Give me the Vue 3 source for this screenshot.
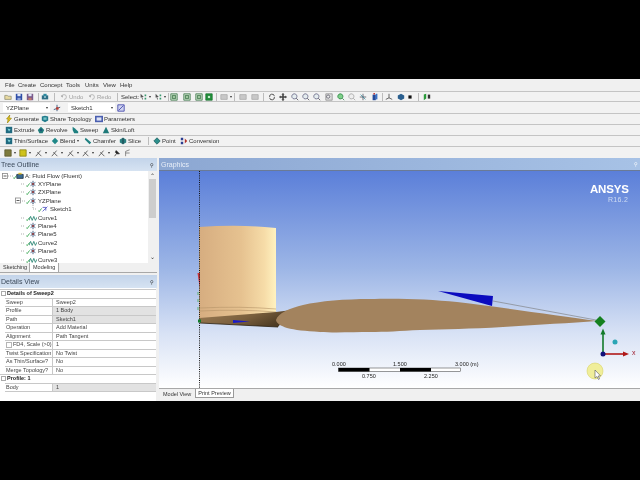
<script setup>
const shapes = {
  open: [['M1 8V3h3l1 1h4v4z', '#e8d9a0', '#8a8a70']],
  save: [['M1 1h8v8H1z', '#2f4fa8'], ['M3 1h4v3H3z', '#dfe6f5'], ['M3 6h4v3H3z', '#8fa3d8']],
  saveall: [['M1 1h8v8H1z', '#7a5b8c'], ['M3 1h4v3H3z', '#dfe6f5'], ['M3 6h4v3H3z', '#c27a6a']],
  shot: [['M1 3h8v5H1z', '#2e6f86'], ['M3 1h4v3H3z', '#2e8aa0'], ['M4 4h2v2H4z', '#bfe4ee']],
  undo: [['M2 5a3 3 0 1 1 3 3', 'none', '#a8a8a8'], ['M1 3l2 3 1-3z', '#a8a8a8']],
  sel: [['M2 1l4 4-2 0 1 3-1 0-1-3-1 1z', '#555'], ['M7 2h2v2H7zM7 6h2v2H7z', '#3a9a70']],
  box: [['M1 1h8v8H1z', '#cfe3cf', '#2d6b3a'], ['M3 3h4v4H3z', '#9fc49f', '#2d6b3a']],
  gbox: [['M1 1h8v8H1z', '#1fa03a', '#14662a'], ['M3 3h4v4H3z', '#bff0c8', '#14662a']],
  grey: [['M1 2h8v6H1z', '#c8c8c8', '#a8a8a8']],
  rot: [['M2 5a3 3 0 0 1 6-1', 'none', '#222'], ['M8 5a3 3 0 0 1-6 1', 'none', '#222']],
  pan: [['M5 0l2 2H6v2h2V3l2 2-2 2V6H6v2h1l-2 2-2-2h1V6H2v1L0 5l2-2v1h2V2H3z', '#444']],
  zoom: [['M4.2 1a3.2 3.2 0 1 1-.01 0z', '#e4ecef', '#557'], ['M6.5 6.5L9 9', 'none', '#334']],
  gzoom: [['M4.2 1a3.2 3.2 0 1 1-.01 0z', '#7ed08a', '#1d7a35'], ['M6.5 6.5L9 9', 'none', '#1d7a35']],
  lzoom: [['M4.2 1a3.2 3.2 0 1 1-.01 0z', '#eee', '#999'], ['M6.5 6.5L9 9', 'none', '#999']],
  fit: [['M1 1h8v8H1z', '#ddd', '#888'], ['M4 2.5a2 2 0 1 1-.01 0z', '#eee', '#445']],
  axes: [['M5 1v8M1 5h8', 'none', '#445'], ['M2 2l6 6', 'none', '#2a8a9a']],
  cube: [['M2 2h4v7H2z', '#244a9a'], ['M6 1h2v7H6z', '#3a72c8'], ['M3 0h2v2H3z', '#c23a3a']],
  tri: [['M5 1v5L1 8M5 6l4 2', 'none', '#333']],
  dcube: [['M1 3l4-2 4 2v4l-4 2-4-2z', '#2a5f8f']],
  dot: [['M3 3h4v4H3z', '#111']],
  pair: [['M1 2l3-1v6L1 9z', '#2a9a3a'], ['M6 2h3v5H6z', '#333']],
  bolt: [['M6 0L2 5h2L3 10l5-6H5z', '#e6c81e', '#a08a10']],
  share: [['M1 2l4-1 4 1v5l-4 2-4-2z', '#217c8c'], ['M3 3h4v3H3z', '#7ac4c8']],
  param: [['M0 1h10v8H0z', '#4a5fb0'], ['M2 3h6v4H2z', '#dde3f5']],
  ext: [['M1 1h8v8H1z', '#1f6a80'], ['M3 3l4 1-2 3z', '#7fd0d6']],
  rev: [['M5 1l4 4-2 4H3L1 5z', '#1f7a7a'], ['M4 4h2v2H4z', '#1a3f78']],
  swp: [['M2 1l3 2 4 4v2H4L2 5z', '#1f8080']],
  skin: [['M5 1l2 4 2 4H1l2-4z', '#1f7a7a']],
  blend: [['M1 5l4-4 4 4-4 4z', '#1f8888']],
  chamf: [['M2 1l7 6-2 2-6-6z', '#1f8080']],
  slice: [['M1 3l4-2 4 2v4l-4 2-4-2z', '#2a7f80'], ['M5 1v8', 'none', '#123']],
  point: [['M5 1l4 4-4 4-4-4z', '#2d8f8c', '#175a5a']],
  conv: [['M1 1h3v3H1zM1 6h3v3H1z', '#2b3d90'], ['M6 2l3 3-3 3z', '#b0302a']],
  olive: [['M1 1h8v8H1z', '#7d7a3c', '#55532a']],
  yel: [['M1 1h8v8H1z', '#cfc21c', '#807a10']],
  pen: [['M1 9l6-7M3 4l5 5', 'none', '#333']],
  pin: [['M2 9l3-4M4 2l4 4-3 0-2-2z', '#222', '#222']],
  flag: [['M2 9V3l5-2M2 5h5', 'none', '#666']],
  plane: [['M5 1v8M2 3l6 4M2 7l6-4', 'none', '#1d3f6b'], ['M4 4h2v2H4z', '#c0392b']],
  curve: [['M0 8l2-5 2 5 2-5 2 5 2-4', 'none', '#1b7d6a']],
  sketch: [['M2 8l6-6M2 3h4v4', 'none', '#4a4ec0']],
  body: [['M1 3h8v5H1z', '#3a6a90', '#234'], ['M3 1h4v2H3z', '#e0c030']]
}

const place = (list, end) => list.map((it, i) => ({ ...it, w: (i + 1 < list.length ? list[i + 1].x : end) - it.x }))

const menu = [['File', 5], ['Create', 18], ['Concept', 40], ['Tools', 66], ['Units', 85], ['View', 103], ['Help', 120]]
const menuItems = place(menu.map(([t, x]) => ({ t, x })), 140)

const toolRows = [
  place([
    { x: 4, i: 'open' }, { x: 15, i: 'save' }, { x: 26, i: 'saveall' }, { x: 38, sep: 1 }, { x: 41, i: 'shot' }, { x: 54, sep: 1 },
    { x: 60, i: 'undo', t: 'Undo', dim: 1 }, { x: 88, i: 'undo', t: 'Redo', dim: 1 }, { x: 117, sep: 1 }, { x: 121, t: 'Select:' },
    { x: 139, i: 'sel', tail: 1 }, { x: 154, i: 'sel', tail: 1 }, { x: 168, sep: 1 }, { x: 170, i: 'box' }, { x: 183, i: 'box' }, { x: 195, i: 'box' }, { x: 205, i: 'gbox' },
    { x: 216, sep: 1 }, { x: 220, i: 'grey', tail: 1 }, { x: 234, sep: 1 }, { x: 239, i: 'grey' }, { x: 251, i: 'grey' }, { x: 263, sep: 1 },
    { x: 268, i: 'rot' }, { x: 279, i: 'pan' }, { x: 291, i: 'zoom' }, { x: 302, i: 'zoom' }, { x: 313, i: 'zoom' }, { x: 325, i: 'fit' },
    { x: 337, i: 'gzoom' }, { x: 348, i: 'lzoom' }, { x: 359, i: 'axes' }, { x: 371, i: 'cube' }, { x: 382, sep: 1 }, { x: 385, i: 'tri' },
    { x: 397, i: 'dcube' }, { x: 406, i: 'dot' }, { x: 418, sep: 1 }, { x: 423, i: 'pair' }
  ], 440)
]
const lowerRows = [
  place([{ x: 5, i: 'bolt', t: 'Generate' }, { x: 41, i: 'share', t: 'Share Topology' }, { x: 95, i: 'param', t: 'Parameters' }], 140),
  place([{ x: 5, i: 'ext', t: 'Extrude' }, { x: 37, i: 'rev', t: 'Revolve' }, { x: 71, i: 'swp', t: 'Sweep' }, { x: 102, i: 'skin', t: 'Skin/Loft' }], 140),
  place([
    { x: 5, i: 'ext', t: 'Thin/Surface' }, { x: 51, i: 'blend', t: 'Blend', tail: 1 }, { x: 84, i: 'chamf', t: 'Chamfer' }, { x: 119, i: 'slice', t: 'Slice' },
    { x: 148, sep: 1 }, { x: 153, i: 'point', t: 'Point' }, { x: 180, i: 'conv', t: 'Conversion' }
  ], 225),
  place([
    { x: 4, i: 'olive', tail: 1 }, { x: 19, i: 'yel', tail: 1 }, { x: 35, i: 'pen', tail: 1 }, { x: 51, i: 'pen', tail: 1 }, { x: 67, i: 'pen', tail: 1 },
    { x: 82, i: 'pen', tail: 1 }, { x: 98, i: 'pen', tail: 1 }, { x: 113, i: 'pin' }, { x: 124, i: 'flag' }
  ], 136)
]

const tree = [
  { t: 'A: Fluid Flow (Fluent)', i: 'body', p: 13 },
  { t: 'XYPlane', i: 'plane', p: 26 },
  { t: 'ZXPlane', i: 'plane', p: 26 },
  { t: 'YZPlane', i: 'plane', p: 26 },
  { t: 'Sketch1', i: 'sketch', p: 38 },
  { t: 'Curve1', i: 'curve', p: 26 },
  { t: 'Plane4', i: 'plane', p: 26 },
  { t: 'Plane5', i: 'plane', p: 26 },
  { t: 'Curve2', i: 'curve', p: 26 },
  { t: 'Plane6', i: 'plane', p: 26 },
  { t: 'Curve3', i: 'curve', p: 26 }
]

const details = [
  { h: 'Details of Sweep2' },
  { k: 'Sweep', v: 'Sweep2' },
  { k: 'Profile', v: '1 Body', g: 1 },
  { k: 'Path', v: 'Sketch1', g: 1 },
  { k: 'Operation', v: 'Add Material' },
  { k: 'Alignment', v: 'Path Tangent' },
  { k: 'FD4, Scale (>0)', v: '1', c: 1 },
  { k: 'Twist Specification', v: 'No Twist' },
  { k: 'As Thin/Surface?', v: 'No' },
  { k: 'Merge Topology?', v: 'No' },
  { h: 'Profile: 1' },
  { k: 'Body', v: '1', g: 1 }
]
</script>

<template>
  <div class="screen">
    <div class="bar"></div>
    <div class="app">
      <nav class="menu">
        <span v-for="m in menuItems" :key="m.t" class="cell" :style="{ width: m.w + 'px' }">{{ m.t }}</span>
      </nav>

      <div class="tools">
        <div class="row r1">
          <span :style="{ width: toolRows[0][0].x + 'px' }"></span>
          <span v-for="(it, n) in toolRows[0]" :key="n" class="cell" :style="{ width: it.w + 'px' }">
            <span v-if="it.sep" class="sep"></span>
            <svg v-if="it.i" class="ico" viewBox="0 0 10 10">
              <path v-for="(s, j) in shapes[it.i]" :key="j" :d="s[0]" :fill="s[1]" :stroke="s[2] || 'none'" stroke-width="0.9" />
            </svg>
            <span v-if="it.t" :class="{ dim: it.dim }">{{ it.t }}</span>
            <span v-if="it.tail" class="caret"></span>
          </span>
        </div>

        <div class="row r2">
          <div class="combo first"><span>YZPlane</span><span class="caret"></span></div>
          <svg class="ico gapped" viewBox="0 0 10 10"><path d="M5 1v8M1 7l8-3" fill="none" stroke="#1d3f6b" /><path d="M4 4h3v3H4z" fill="#c0392b" /></svg>
          <div class="combo"><span>Sketch1</span><span class="caret"></span></div>
          <svg class="ico after" viewBox="0 0 10 10"><path d="M1 1h8v8H1z" fill="#cfd3f0" stroke="#3a3fa8" /><path d="M2 8l6-6" stroke="#3a3fa8" /></svg>
        </div>

        <div v-for="(r, k) in lowerRows" :key="k" class="row" :class="{ last: k === 3 }">
          <span :style="{ width: r[0].x + 'px' }"></span>
          <span v-for="(it, n) in r" :key="n" class="cell" :style="{ width: it.w + 'px' }">
            <span v-if="it.sep" class="sep"></span>
            <svg v-if="it.i" class="ico" viewBox="0 0 10 10">
              <path v-for="(s, j) in shapes[it.i]" :key="j" :d="s[0]" :fill="s[1]" :stroke="s[2] || 'none'" stroke-width="0.9" />
            </svg>
            <span v-if="it.t">{{ it.t }}</span>
            <span v-if="it.tail" class="caret"></span>
          </span>
        </div>
      </div>

      <div class="work">
        <aside class="side">
          <header class="phead">Tree Outline<span class="pin">⚲</span></header>
          <div class="tree">
            <svg class="lines" width="50" height="92" viewBox="0 0 50 92">
              <g stroke="#999" stroke-width="0.8" fill="none" stroke-dasharray="1 1">
                <path d="M8 5h5M21 13h4M21 21h4M22 30h3M33 32v6h4M21 47h4M21 55h4M21 63h4M21 72h4M21 80h4M21 89h4" />
              </g>
              <g fill="#fff" stroke="#888" stroke-width="0.8">
                <rect x="2.5" y="2.5" width="5" height="5" />
                <rect x="15.5" y="27" width="5" height="5" />
              </g>
              <path d="M3.5 5h3M16.5 29.5h3" stroke="#333" stroke-width="0.8" />
            </svg>
            <div class="tlist">
              <div v-for="n in tree" :key="n.t" class="tnode" :style="{ paddingLeft: n.p + 'px' }">
                <svg class="ico tick" viewBox="0 0 10 10"><path d="M0 6l3 3 6-8" fill="none" stroke="#1e9a3a" stroke-width="2" /></svg>
                <svg class="ico" viewBox="0 0 10 10">
                  <path v-for="(s, j) in shapes[n.i]" :key="j" :d="s[0]" :fill="s[1]" :stroke="s[2] || 'none'" stroke-width="1" />
                </svg>
                <span>{{ n.t }}</span>
              </div>
            </div>
            <div class="scroll">
              <span class="arr">⌃</span>
              <span class="thumb"></span>
              <span class="arr low">⌄</span>
            </div>
          </div>
          <div class="tabs">
            <span class="tab">Sketching</span>
            <span class="tab on">Modeling</span>
          </div>
          <header class="phead second">Details View<span class="pin">⚲</span></header>
          <div class="details">
            <template v-for="(d, n) in details" :key="n">
              <div v-if="d.h" class="drow head"><span class="exp"></span><b>{{ d.h }}</b></div>
              <div v-else class="drow">
                <span class="key"><span v-if="d.c" class="check"></span>{{ d.k }}</span>
                <span class="val" :class="{ grey: d.g }">{{ d.v }}</span>
              </div>
            </template>
          </div>
        </aside>

        <main class="main">
          <header class="ghead">Graphics<span class="gpin">⚲</span></header>
          <svg class="view" viewBox="159 171 481 217" width="481" height="217">
            <defs>
              <linearGradient id="sky" x1="0" y1="0" x2="0" y2="1">
                <stop offset="0" stop-color="#5b7fd9" />
                <stop offset="0.45" stop-color="#9db6e6" />
                <stop offset="0.75" stop-color="#d8e2f5" />
                <stop offset="1" stop-color="#ffffff" />
              </linearGradient>
              <linearGradient id="cyl" x1="0" y1="0" x2="1" y2="0">
                <stop offset="0" stop-color="#d6ad80" />
                <stop offset="0.55" stop-color="#e6c290" />
                <stop offset="0.85" stop-color="#f6dca8" />
                <stop offset="1" stop-color="#fff2c0" />
              </linearGradient>
              <linearGradient id="wedge" x1="0" y1="0" x2="1" y2="0.4">
                <stop offset="0" stop-color="#9c7d55" />
                <stop offset="0.6" stop-color="#7a5f3d" />
                <stop offset="1" stop-color="#4e3c24" />
              </linearGradient>
            </defs>
            <rect x="159" y="171" width="481" height="217" fill="url(#sky)" />

            <path d="M199 227Q240 224 276 228V313L199 319z" fill="url(#cyl)" />
            <path d="M200 308Q240 306 276 309M200 311Q240 309 276 312" fill="none" stroke="#b59468" stroke-width="0.6" />
            <path d="M199 318L276 312 292 310 278 327 240 325 200 323z" fill="url(#wedge)" />
            <path d="M200 323L278 327" stroke="#2a1f10" stroke-width="0.8" />
            <path d="M276 320C278 313 290 308 303 305C320 301 345 299 370 299C395 298 430 299 457 302C500 307 560 316 597 321C570 323 535 325 503 327C470 329 445 329 420 330C400 331 385 332 370 332C355 332 335 333 320 332C305 331 295 330 287 328C281 326 276 323 276 320z" fill="#a3835e" />

            <path d="M233 320l11 1 6 .5-6 .5-11 1z" fill="#1a1ac8" />
            <path d="M199 283l-1.500-10 2.500 0 0 14z" fill="#c8343a" />
            <path d="M199.500 171V388" stroke="#111" stroke-width="1" stroke-dasharray="1 1.200" />
            <rect x="198" y="319.500" width="3" height="3" fill="#127a2a" />
            <path d="M198 292v3M198 299v3M198 307v3" stroke="#5fb070" />

            <path d="M438 291L493 296 492 306z" fill="#0b0bbf" />
            <path d="M493 301L596 320" stroke="#777" stroke-width="0.6" />
            <path d="M600 316L605.500 321.500 600 327 594.500 321.500z" fill="#14801f" />

            <path d="M603 354V334" stroke="#127a2a" stroke-width="1.600" />
            <path d="M603 328.500l2.500 6h-5z" fill="#127a2a" />
            <path d="M603 354H624" stroke="#b01818" stroke-width="1.600" />
            <path d="M629 354l-6-2.500v5z" fill="#b01818" />
            <circle cx="603" cy="354" r="2.500" fill="#10107a" />
            <circle cx="615" cy="342" r="2.500" fill="#2aa5b5" />
            <text x="632" y="355" class="t axis">x</text>

            <circle cx="595" cy="371" r="8" fill="#f0ee9a" stroke="#d8d468" stroke-width="0.6" />
            <path d="M595 370l0 8 2-1.500 1.500 3 1-.5-1.300-3 2.300-.2z" fill="#fff" stroke="#555" stroke-width="0.6" />

            <text x="590" y="193" class="brand">ANSYS</text>
            <text x="608" y="201.500" class="rev">R16.2</text>

            <rect x="338.500" y="368" width="122" height="3.500" fill="#fff" stroke="#333" stroke-width="0.5" />
            <rect x="338.500" y="368" width="31" height="3.500" fill="#000" />
            <rect x="400" y="368" width="31" height="3.500" fill="#000" />
            <text x="332" y="366" class="t">0.000</text>
            <text x="393" y="366" class="t">1.500</text>
            <text x="455" y="366" class="t">3.000 (m)</text>
            <text x="362" y="378" class="t">0.750</text>
            <text x="424" y="378" class="t">2.250</text>
          </svg>
          <div class="gtabs">
            <span class="gtab">Model View</span>
            <span class="gtab box">Print Preview</span>
          </div>
        </main>
      </div>
    </div>
    <div class="bar low"></div>
  </div>
</template>

<style>
html, body { background: #000; }
</style>

<style scoped>
.screen {
  width: 640px;
  height: 480px;
  overflow: hidden;
  background: #000;
  display: flex;
  flex-direction: column;
  font-family: "Liberation Sans", Arial, sans-serif;
  font-size: 6px;
  color: #333;
}
.bar { height: 79px; flex: none; background: #000; }
.bar.low { flex: 1; height: auto; }
.app {
  height: 322px;
  flex: none;
  display: flex;
  flex-direction: column;
  background: #f0f0f0;
  filter: blur(0.3px);
}
.menu { height: 12px; display: flex; align-items: center; padding-left: 5px; flex: none; }
.cell { display: inline-flex; align-items: center; gap: 1px; flex: none; height: 100%; white-space: nowrap; }
.tools { flex: none; }
.row {
  height: 11px;
  box-sizing: border-box;
  display: flex;
  align-items: center;
  border-top: 1px solid #c4c4c4;
  background: #f2f2f2;
}
.r1 { height: 10px; }
.r2 { height: 12px; }
.row.last { height: 12px; }
.ico { width: 8px; height: 8px; flex: none; }
.dim { color: #a0a0a0; }
.caret {
  width: 0;
  height: 0;
  border-left: 1.500px solid transparent;
  border-right: 1.500px solid transparent;
  border-top: 2px solid #333;
  flex: none;
  margin-left: 1px;
}
.sep { width: 1px; height: 8px; background: #bcbcbc; }
.combo {
  width: 47px;
  height: 9px;
  box-sizing: border-box;
  background: #fff;
  display: flex;
  align-items: center;
  justify-content: space-between;
  padding: 0 2px 0 3px;
}
.combo.first { margin-left: 3px; }
.gapped { margin: 0 7px 0 3px; }
.after { margin-left: 2px; }
.work { flex: 1; display: flex; min-height: 0; }
.side { width: 157px; flex: none; display: flex; flex-direction: column; background: #f0f0f0; }
.phead {
  height: 13px;
  flex: none;
  box-sizing: border-box;
  display: flex;
  align-items: center;
  justify-content: space-between;
  padding: 0 3px 0 1px;
  font-size: 7px;
  color: #3c4a5a;
  background: linear-gradient(#c3d4ea, #d6e3f2);
}
.phead.second { margin-top: 2px; }
.pin { font-size: 5px; color: #222; }
.tree { height: 92px; flex: none; background: #fff; position: relative; display: flex; overflow: hidden; }
.lines { position: absolute; left: 0; top: 0; }
.tlist { flex: 1; min-width: 0; padding-top: 0.500px; position: relative; }
.tnode { height: 8.400px; display: flex; align-items: center; white-space: nowrap; gap: 1px; }
.tick { width: 4px; height: 4px; margin: 2px -2px 0 0; }
.scroll {
  width: 9px;
  flex: none;
  background: #f0f0f0;
  display: flex;
  flex-direction: column;
  align-items: center;
}
.arr { height: 8px; font-size: 6px; line-height: 10px; color: #333; }
.arr.low { margin-top: auto; line-height: 4px; }
.thumb { width: 7px; height: 39px; background: #cdcdcd; }
.tabs {
  height: 10px;
  flex: none;
  display: flex;
  border-bottom: 1px solid #a8a8a8;
  box-sizing: border-box;
  padding-left: 2px;
  align-items: flex-start;
}
.tab { padding: 1px 1px 0; width: 25px; white-space: nowrap; font-size: 5.500px; }
.tab.on { width: 30px; box-sizing: border-box; height: 10px; background: #fff; border: 1px solid #a8a8a8; border-top: 0; padding: 1px 0 0 3px; }
.details {
  flex: 1;
  background: #fff;
  padding-top: 1px;
  margin-right: 1px;
  color: #444;
  font-size: 5.500px;
}
.drow {
  height: 8.500px;
  box-sizing: border-box;
  display: grid;
  grid-template-columns: 48px 1fr;
  align-items: stretch;
  margin-left: 5px;
  border-top: 1px solid #c8c8c8;
  line-height: 7.500px;
  white-space: nowrap;
}
.drow:nth-child(12) { border-bottom: 1px solid #c8c8c8; height: 9.500px; }
.drow.head { display: flex; margin-left: 0; padding-left: 7px; color: #222; position: relative; }
.exp {
  position: absolute;
  left: 1px;
  top: 1px;
  width: 3px;
  height: 3px;
  border: 1px solid #aaa;
}
.key { padding-left: 1px; border-right: 1px solid #c8c8c8; display: flex; align-items: center; gap: 1px; min-width: 0; }
.check { width: 4px; height: 4px; border: 1px solid #b5b5b5; background: #fff; flex: none; }
.val { padding-left: 3px; }
.val.grey { background: #e2e2e2; }
.main { flex: 1; display: flex; flex-direction: column; margin-left: 2px; min-width: 0; }
.ghead {
  height: 13px;
  flex: none;
  box-sizing: border-box;
  display: flex;
  align-items: center;
  justify-content: space-between;
  padding: 0 2px;
  font-size: 7px;
  color: #e8eef8;
  background: linear-gradient(90deg, #8ca7d2, #a7c2e6);
  border-bottom: 1px solid #6a7a96;
}
.gpin { font-size: 5px; color: #fff; }
.view { display: block; flex: none; }
.brand { font: 700 11.500px "Liberation Sans", Arial, sans-serif; fill: #fff; letter-spacing: -0.200px; }
.rev { font: 7px "Liberation Sans", Arial, sans-serif; fill: #cfdcf3; letter-spacing: 0.300px; }
.t { font: 5.500px "Liberation Sans", Arial, sans-serif; fill: #222; }
.axis { fill: #a02030; font-size: 7px; }
.gtabs {
  flex: 1;
  display: flex;
  align-items: flex-start;
  gap: 3px;
  padding-left: 3px;
  border-top: 1px solid #a8a8a8;
  background: #f0f0f0;
}
.gtab { font-size: 5.500px; white-space: nowrap; padding: 2px 1px; }
.gtab.box { background: #fff; border: 1px solid #9a9a9a; border-top: 0; padding: 1px 2px; }
</style>
